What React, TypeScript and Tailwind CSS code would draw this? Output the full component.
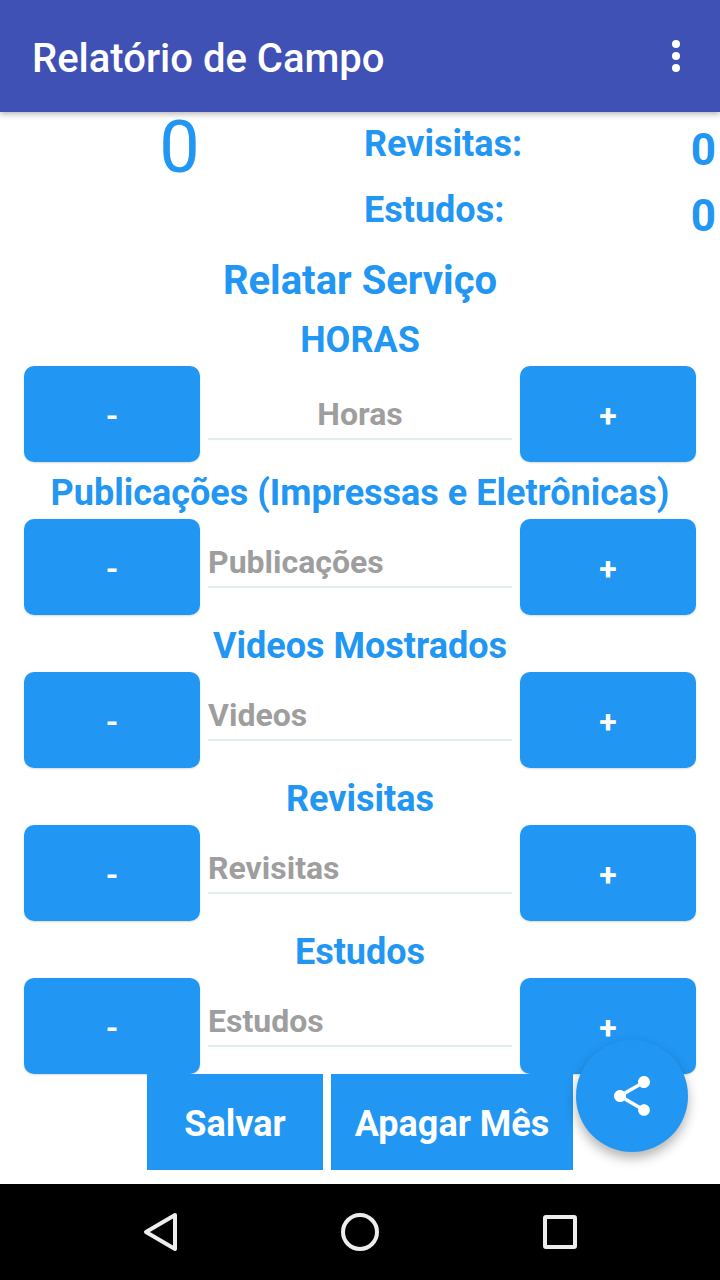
const counters = [
  { title: "HORAS", placeholder: "Horas", center: true },
  { title: "Publicações (Impressas e Eletrônicas)", placeholder: "Publicações" },
  { title: "Videos Mostrados", placeholder: "Videos" },
  { title: "Revisitas", placeholder: "Revisitas" },
  { title: "Estudos", placeholder: "Estudos" },
];

const blue = "text-[#2196F3]";

const CounterButton = ({ label }: { label: string }) => (
  <button className="w-[176px] h-[96px] shrink-0 flex items-center justify-center rounded-[10px] bg-[#2196F3] text-white text-[32px] font-bold pt-1 shadow-[0_1px_2px_rgba(0,0,0,0.15)]">
    {label}
  </button>
);

const App = () => {
  return (
    <div className="relative w-[720px] h-[1280px] flex flex-col overflow-hidden bg-white font-['Roboto',sans-serif]">
      <header className="relative z-10 h-[112px] shrink-0 flex items-center justify-between pl-8 pr-[40px] bg-[#3F51B5] shadow-[0_2px_6px_rgba(0,0,0,0.3)]">
        <h1 className="text-[40px] font-medium text-white leading-none pt-[6px]">Relatório de Campo</h1>
        <div className="flex flex-col gap-[4px]">
          <span className="w-2 h-2 rounded-full bg-white" />
          <span className="w-2 h-2 rounded-full bg-white" />
          <span className="w-2 h-2 rounded-full bg-white" />
        </div>
      </header>

      <main className="flex-1 flex flex-col">
        <section className="h-[144px] shrink-0 flex">
          <div className={`w-[359px] text-center text-[72px] leading-[72px] ${blue}`}>0</div>
          <div className="flex-1 flex flex-col pl-[5px] pr-[4px] pt-[12px] gap-[20px]">
            <div className={`flex justify-between font-bold leading-[40px] ${blue}`}>
              <span className="text-[36px]">Revisitas:</span>
              <span className="text-[44px] mt-[6px]">0</span>
            </div>
            <div className={`flex justify-between font-bold leading-[40px] ${blue}`}>
              <span className="text-[36px]">Estudos:</span>
              <span className="text-[44px] mt-[6px]">0</span>
            </div>
          </div>
        </section>

        <h2 className={`h-[50px] mb-[3px] flex items-center justify-center text-[40px] font-bold ${blue}`}>Relatar Serviço</h2>

        {counters.map((row) => (
          <div key={row.title} className="flex flex-col">
            <h3 className={`h-[57px] pt-[5px] flex items-center justify-center text-[36px] font-bold whitespace-nowrap ${blue}`}>{row.title}</h3>
            <div className="h-[96px] flex gap-2 px-6">
              <CounterButton label="-" />
              <div className={`flex-1 flex items-center border-b-2 border-[#E3EEEE] text-[#9E9E9E] text-[32px] font-bold ${row.center ? "h-[74px] pt-[24px] justify-center" : "h-[69px] pt-[19px]"}`}>
                {row.placeholder}
              </div>
              <CounterButton label="+" />
            </div>
          </div>
        ))}

        <div className="h-[96px] flex justify-start gap-2 pl-[147px]">
          <button className="w-[176px] bg-[#2196F3] text-white text-[36px] font-bold pt-1">Salvar</button>
          <button className="w-[242px] bg-[#2196F3] text-white text-[36px] font-bold pt-1">Apagar Mês</button>
        </div>
      </main>

      <button className="absolute left-[576px] top-[1040px] w-[112px] h-[112px] rounded-full bg-[#2196F3] flex items-center justify-center shadow-[0_6px_12px_rgba(0,0,0,0.3)]">
        <svg width="48" height="48" viewBox="0 0 24 24" fill="white">
          <path d="M18 16.08c-.76 0-1.44.3-1.96.77L8.91 12.7c.05-.23.09-.46.09-.7s-.04-.47-.09-.7l7.05-4.11c.54.5 1.25.81 2.04.81 1.66 0 3-1.34 3-3s-1.34-3-3-3-3 1.34-3 3c0 .24.04.47.09.7L8.04 9.81C7.5 9.31 6.79 9 6 9c-1.66 0-3 1.34-3 3s1.34 3 3 3c.79 0 1.5-.31 2.04-.81l7.12 4.16c-.05.21-.08.43-.08.65 0 1.61 1.31 2.92 2.92 2.92 1.61 0 2.92-1.31 2.92-2.92s-1.31-2.92-2.92-2.92z" />
        </svg>
      </button>

      <nav className="h-[96px] shrink-0 bg-black flex items-center justify-center gap-[136px]">
        <svg width="64" height="64" viewBox="0 0 64 64" fill="none" stroke="#EDEDED" strokeWidth="4" strokeLinejoin="round">
          <path d="M47 15 L18 32 L47 49 Z" />
        </svg>
        <svg width="64" height="64" viewBox="0 0 64 64" fill="none" stroke="#EDEDED" strokeWidth="4">
          <circle cx="32" cy="32" r="17" />
        </svg>
        <svg width="64" height="64" viewBox="0 0 64 64" fill="none" stroke="#EDEDED" strokeWidth="4" strokeLinejoin="round">
          <rect x="17" y="17" width="30" height="30" rx="1" />
        </svg>
      </nav>
    </div>
  );
};

export default App;
